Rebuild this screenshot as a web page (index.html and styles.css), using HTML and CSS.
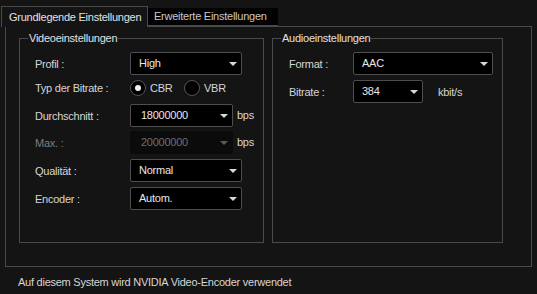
FILE: index.html
```html
<!DOCTYPE html>
<html lang="de">
<head>
<meta charset="utf-8">
<title>Einstellungen</title>
<link rel="stylesheet" href="styles.css">
</head>
<body>
<div class="tabs">
  <div class="tab active">Grundlegende Einstellungen</div>
  <div class="tab">Erweiterte Einstellungen</div>
</div>
<div class="panel">
  <div class="group video">
    <span class="legend">Videoeinstellungen</span>
    <div class="row">
      <span class="label">Profil :</span>
      <div class="select w112"><span>High</span><i class="arrow"></i></div>
    </div>
    <div class="row radios">
      <span class="label">Typ der Bitrate :</span>
      <span class="radio checked"></span><span class="rlabel">CBR</span>
      <span class="radio"></span><span class="rlabel">VBR</span>
    </div>
    <div class="row">
      <span class="label">Durchschnitt :</span>
      <div class="select w103 pad11"><span>18000000</span><i class="arrow"></i></div>
      <span class="unit">bps</span>
    </div>
    <div class="row tight">
      <span class="label disabled">Max. :</span>
      <div class="select w103 pad11 off"><span>20000000</span><i class="arrow"></i></div>
      <span class="unit">bps</span>
    </div>
    <div class="row">
      <span class="label">Qualität :</span>
      <div class="select w112"><span>Normal</span><i class="arrow"></i></div>
    </div>
    <div class="row">
      <span class="label">Encoder :</span>
      <div class="select w112"><span>Autom.</span><i class="arrow"></i></div>
    </div>
  </div>
  <div class="group audio">
    <span class="legend">Audioeinstellungen</span>
    <div class="row">
      <span class="label">Format :</span>
      <div class="select w140"><span>AAC</span><i class="arrow"></i></div>
    </div>
    <div class="row">
      <span class="label">Bitrate :</span>
      <div class="select w70"><span>384</span><i class="arrow"></i></div>
      <span class="unit far">kbit/s</span>
    </div>
  </div>
</div>
<div class="status">Auf diesem System wird NVIDIA Video-Encoder verwendet</div>
</body>
</html>
```
FILE: styles.css
```css
html, body {
  margin: 0;
  padding: 0;
  background: #141414;
}
body {
  width: 537px;
  height: 294px;
  overflow: hidden;
  font-family: "Liberation Sans", Arial, sans-serif;
  font-size: 11px;
  letter-spacing: -0.25px;
  color: #d6d6d6;
  white-space: nowrap;
}
.tabs {
  display: flex;
  align-items: flex-start;
  padding: 6px 0 0 1px;
  height: 20px;
}
.tab {
  box-sizing: border-box;
  width: 130px;
  height: 18px;
  margin-top: 2px;
  padding: 0 0 0 6px;
  line-height: 17px;
  background: #020202;
  color: #c8c8c8;
  border-bottom: 1px solid #4a4a4a;
}
.tab.active {
  width: 147px;
  height: 21px;
  margin-top: 0;
  padding: 0 0 0 7px;
  line-height: 21px;
  background: #141414;
  color: #e2e2e2;
  border: 1px solid #4a4a4a;
  border-bottom: none;
  position: relative;
  z-index: 1;
}
.panel {
  box-sizing: border-box;
  margin: 0 5px;
  height: 241px;
  border: 1px solid #4a4a4a;
  display: flex;
  gap: 8px;
  padding: 11px 0 0 13px;
}
.group {
  position: relative;
  box-sizing: border-box;
  height: 205px;
  border: 1px solid #4a4a4a;
  display: flex;
  flex-direction: column;
  gap: 5px;
  padding-top: 13px;
}
.group.video { width: 245px; padding-left: 15px; }
.group.audio { width: 231px; padding-left: 16px; }
.legend {
  position: absolute;
  top: -8px;
  left: 8px;
  padding: 0 1px;
  background: #141414;
  color: #e2e2e2;
  line-height: 14px;
}
.row {
  display: flex;
  align-items: center;
  height: 23px;
}
.row.radios { height: 16px; margin-bottom: 3px; }
.row.tight { margin-top: -1px; }
.label {
  width: 95px;
  flex: none;
}
.audio .label { width: 64px; }
.label.disabled { color: #7e7e7e; }
.select {
  box-sizing: border-box;
  position: relative;
  height: 23px;
  background: #000;
  border: 1px solid #4e4e4e;
  border-radius: 2px;
  padding-left: 8px;
  line-height: 21px;
  color: #e8e8e8;
  flex: none;
}
.select.pad11 { padding-left: 10px; }
.select.off {
  background: #0b0b0b;
  border-color: #0b0b0b;
  color: #6e6e6e;
}
.w112 { width: 112px; }
.w103 { width: 103px; }
.w140 { width: 140px; }
.w70 { width: 70px; }
.arrow {
  position: absolute;
  right: 4px;
  top: 9px;
  width: 0;
  height: 0;
  border-left: 4px solid transparent;
  border-right: 4px solid transparent;
  border-top: 4px solid #d8d8d8;
}
.off .arrow { border-top-color: #5a5a5a; }
.radio {
  box-sizing: border-box;
  width: 16px;
  height: 16px;
  border-radius: 50%;
  border: 1px solid #555;
  background: #000;
  position: relative;
  flex: none;
}
.radio.checked::after {
  content: "";
  position: absolute;
  left: 4px;
  top: 4px;
  width: 6px;
  height: 6px;
  border-radius: 50%;
  background: #f2f2f2;
}
.rlabel {
  margin-left: 4px;
  width: 34px;
}
.unit {
  margin-left: 4px;
  margin-top: -1px;
  color: #d6d6d6;
}
.unit.far { margin-left: 15px; margin-top: 0; }
.status {
  padding: 8px 0 0 18px;
  line-height: 14px;
}
```
